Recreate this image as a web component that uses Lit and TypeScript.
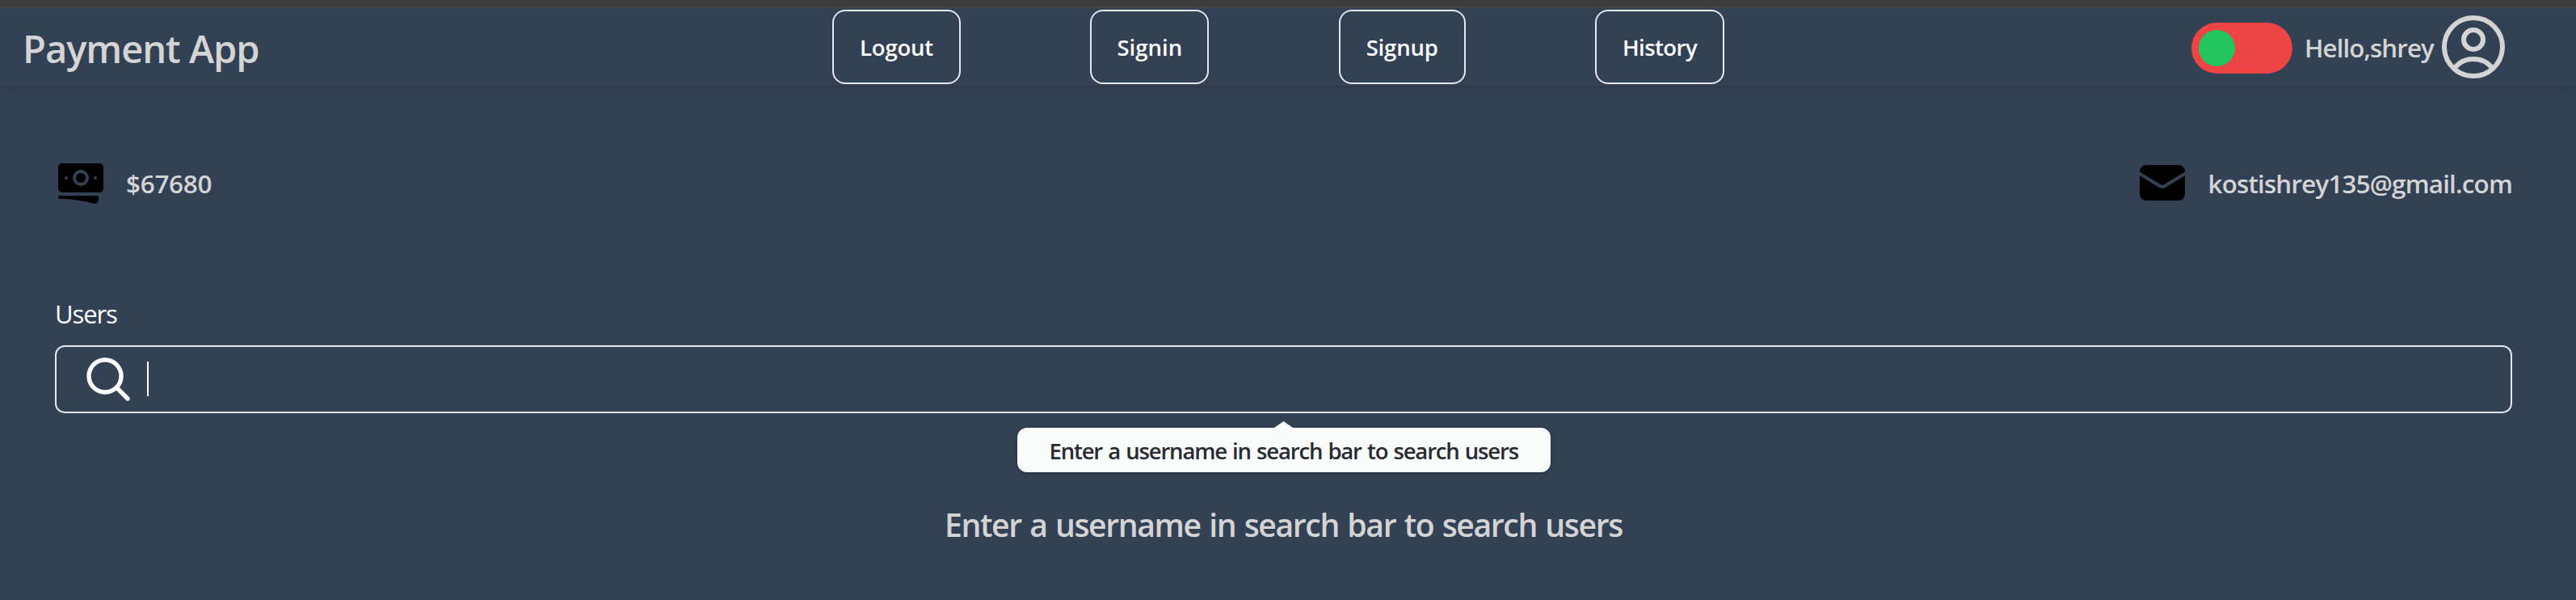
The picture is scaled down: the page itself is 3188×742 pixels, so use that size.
import { LitElement, html, css } from "lit";
import { customElement } from "lit/decorators.js";

@customElement("nav-bar")
class NavBar extends LitElement {
  static styles = css`
    :host { display: block; position: relative; }
    .bar {
      display: grid;
      grid-template-columns: 1030px 1104px 1fr;
      align-items: center;
      height: 96px;
      background: #334155;
      color: #d4d4d4;
      box-shadow: 0 14px 20px -8px rgba(0, 0, 0, 0.08), 0 5px 8px -4px rgba(0, 0, 0, 0.08);
      font-weight: 600;
    }
    .brand { font-size: 47px; line-height: 64px; letter-spacing: -1px; padding: 3px 0 0 28px; white-space: nowrap; }
    .links { display: flex; justify-content: space-between; }
    .link {
      box-sizing: border-box;
      height: 92px;
      border: 2px solid #e5e7eb;
      border-radius: 16px;
      color: #fff;
      background: none;
      font: 600 27.5px/40px "Open Sans", "Noto Sans", sans-serif;
      letter-spacing: -0.2px;
      padding: 2px 0 0;
      text-align: center;
    }
    .logout { width: 159px; }
    .signin { width: 147px; letter-spacing: 0; }
    .signup { width: 157px; }
    .history { width: 160px; letter-spacing: -0.54px; }
    .account { display: flex; align-items: center; justify-content: flex-end; padding-right: 79px; }
    .toggle { box-sizing: border-box; width: 125px; height: 63px; border-radius: 32px; background: #ef4444; padding: 9px; margin: 3px 15px 0 0; }
    .knob { width: 45px; height: 45px; border-radius: 50%; background: #22c55e; }
    .hello { font-size: 31.4px; line-height: 44px; letter-spacing: -0.97px; margin-top: 1px; width: 161px; white-space: nowrap; }
    .avatar { width: 96px; height: 96px; display: block; }
  `;
  render() {
    return html`
      <header class="bar">
        <div class="brand">Payment App</div>
        <nav class="links">
          <button class="link logout">Logout</button>
          <button class="link signin">Signin</button>
          <button class="link signup">Signup</button>
          <button class="link history">History</button>
        </nav>
        <div class="account">
          <div class="toggle"><div class="knob"></div></div>
          <div class="hello">Hello,shrey</div>
          <svg class="avatar" viewBox="0 0 24 24" fill="none" stroke="currentColor" stroke-width="1.5" stroke-linecap="round" stroke-linejoin="round">
            <path d="M17.982 18.725A7.488 7.488 0 0 0 12 15.75a7.488 7.488 0 0 0-5.982 2.975m11.963 0a9 9 0 1 0-11.963 0m11.963 0A8.966 8.966 0 0 1 12 21a8.966 8.966 0 0 1-5.982-2.275M15 9.75a3 3 0 1 1-6 0 3 3 0 0 1 6 0Z" />
          </svg>
        </div>
      </header>`;
  }
}

@customElement("account-info")
class AccountInfo extends LitElement {
  static styles = css`
    :host { display: flex; justify-content: space-between; padding: 88px 79px 0 68px; color: #d4d4d4; }
    .item { display: flex; align-items: center; font-size: 31.4px; line-height: 44px; font-weight: 600; white-space: nowrap; }
    .icon { width: 64px; height: 64px; fill: #000; display: block; }
    .amount { margin-left: 24px; letter-spacing: -0.25px; padding-top: 1px; }
    .email { margin-left: 24px; letter-spacing: -0.83px; padding-top: 1px; }
  `;
  render() {
    return html`
      <div class="item">
        <svg class="icon" viewBox="0 0 24 24">
          <path d="M12 7.5a2.25 2.25 0 1 0 0 4.5 2.25 2.25 0 0 0 0-4.5Z" />
          <path fill-rule="evenodd" d="M1.5 4.875C1.5 3.839 2.34 3 3.375 3h17.25c1.035 0 1.875.84 1.875 1.875v9.75c0 1.036-.84 1.875-1.875 1.875H3.375A1.875 1.875 0 0 1 1.5 14.625v-9.75ZM8.25 9.75a3.75 3.75 0 1 1 7.5 0 3.75 3.75 0 0 1-7.5 0ZM18.75 9a.75.75 0 0 0-.75.75v.008c0 .414.336.75.75.75h.008a.75.75 0 0 0 .75-.75V9.75a.75.75 0 0 0-.75-.75h-.008ZM4.5 9.75A.75.75 0 0 1 5.25 9h.008a.75.75 0 0 1 .75.75v.008a.75.75 0 0 1-.75.75H5.25a.75.75 0 0 1-.75-.75V9.75Z" />
          <path d="M2.25 18a.75.75 0 0 0 0 1.5c5.4 0 10.63.722 15.6 2.075 1.19.324 2.4-.558 2.4-1.82V18.75a.75.75 0 0 0-.75-.75H2.25Z" />
        </svg>
        <span class="amount">$67680</span>
      </div>
      <div class="item">
        <svg class="icon" viewBox="0 0 24 24">
          <path d="M1.5 8.67v8.58a3 3 0 0 0 3 3h15a3 3 0 0 0 3-3V8.67l-8.928 5.493a3 3 0 0 1-3.144 0L1.5 8.67Z" />
          <path d="M22.5 6.908V6.75a3 3 0 0 0-3-3h-15a3 3 0 0 0-3 3v.158l9.714 5.978a1.5 1.5 0 0 0 1.572 0L22.5 6.908Z" />
        </svg>
        <span class="email">kostishrey135@gmail.com</span>
      </div>`;
  }
}

@customElement("user-search")
class UserSearch extends LitElement {
  static styles = css`
    :host { display: block; padding: 108px 79px 0 68px; }
    .label { color: #fff; font-size: 31px; line-height: 44px; letter-spacing: -1.1px; }
    .field {
      position: relative;
      box-sizing: border-box;
      display: flex;
      align-items: center;
      height: 84px;
      margin-top: 17px;
      padding-left: 32px;
      border: 2px solid #e5e7eb;
      border-radius: 12px;
      color: #fff;
    }
    .glass { width: 64px; height: 64px; display: block; }
    .caret { width: 2px; height: 43px; margin: 0 0 1px 16px; background: #fff; }
    .tip {
      position: absolute;
      top: 100px;
      left: 50%;
      transform: translateX(-50%);
      box-sizing: border-box;
      width: 660px;
      height: 55px;
      border-radius: 12px;
      background: #fafcfb;
      color: #292b33;
      font-size: 27.5px;
      font-weight: 600;
      line-height: 57px;
      letter-spacing: -1.17px;
      word-spacing: 1.2px;
      white-space: nowrap;
      padding-left: 40px;
      box-shadow: 0 1px 4px rgba(0, 0, 0, 0.3);
    }
    .arrow { position: absolute; left: 317px; top: -8px; width: 26px; height: 9px; background: #fafcfb; clip-path: polygon(50% 0, 100% 100%, 0 100%); }
    .message {
      margin-top: 110px;
      padding-left: 1101px;
      color: #d4d4d4;
      font-size: 39.2px;
      line-height: 56px;
      font-weight: 600;
      letter-spacing: -1.41px;
      word-spacing: 1.7px;
      white-space: nowrap;
    }
  `;
  render() {
    return html`
      <div class="label">Users</div>
      <div class="field">
        <svg class="glass" viewBox="0 0 24 24" fill="none" stroke="currentColor" stroke-width="2" stroke-linecap="round" stroke-linejoin="round">
          <path d="m21 21-5.197-5.197m0 0A7.5 7.5 0 1 0 5.196 5.196a7.5 7.5 0 0 0 10.607 10.607Z" />
        </svg>
        <span class="caret"></span>
        <div class="tip"><span class="arrow"></span>Enter a username in search bar to search users</div>
      </div>
      <div class="message">Enter a username in search bar to search users</div>`;
  }
}

@customElement("app-root")
class AppRoot extends LitElement {
  static styles = css`
    :host {
      display: block;
      box-sizing: border-box;
      height: 742px;
      overflow: hidden;
      background: #334155;
      font-family: "Open Sans", "Noto Sans", sans-serif;
    }
    .strip { box-sizing: border-box; height: 10px; background: #3c3c3c; border-bottom: 2px solid #444643; }
  `;
  render() {
    return html`
      <div class="strip"></div>
      <nav-bar></nav-bar>
      <account-info></account-info>
      <user-search></user-search>`;
  }
}
